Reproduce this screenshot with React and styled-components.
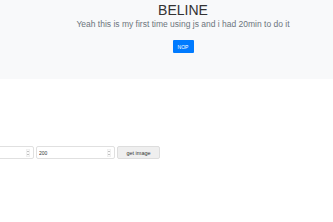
import React from 'react'
import styled, { createGlobalStyle } from 'styled-components';

const GlobalStyle = createGlobalStyle`
body {
margin:0;
background:#ffffff;
font-family:"Liberation Sans", Arial, sans-serif;
overflow:hidden;
}
`

function NumberField(props) {
    return (
        <FieldWrap>
            <NumberInput type="number" defaultValue={props.value} />
            <Spinner width="4" height="8" viewBox="0 0 4 8">
                <rect x="0.25" y="0.25" width="3.5" height="7.5" rx="1" fill="#fafafa" stroke="#dcdcdc" strokeWidth="0.5" />
                <path d="M1 3 L2 2 L3 3 Z" fill="#8a8a8a" />
                <path d="M1 5 L2 6 L3 5 Z" fill="#8a8a8a" />
            </Spinner>
        </FieldWrap>
    )
}

export default function App() {
    return (
        <div>
            <GlobalStyle />
            <Jumbotron>
                <Title>BELINE</Title>
                <Lead>Yeah this is my first time using js and i had 20min to do it</Lead>
                <PrimaryBtn>NOP</PrimaryBtn>
            </Jumbotron>
            <FormRow>
                <NumberField value="200" />
                <NumberField value="200" />
                <GetBtn>get image</GetBtn>
            </FormRow>
        </div>
    )
}

const Jumbotron = styled.div`
height:79px;
box-sizing:border-box;
padding:2px 0 0 33px;
background-color:#f8f9fa;
display:flex;
flex-direction:column;
align-items:center;
`

const Title = styled.h1`
margin:0;
font-size:14px;
font-weight:400;
line-height:1.2;
color:#333333;
`

const Lead = styled.p`
margin:0;
font-size:8.5px;
font-weight:400;
line-height:1.2;
color:#6c757d;
`

const PrimaryBtn = styled.button`
margin-top:11px;
width:21px;
height:13.5px;
padding:0;
border:none;
border-radius:1px;
background:#007bff;
color:white;
font-family:"Liberation Sans", Arial, sans-serif;
font-size:5px;
`

const FormRow = styled.div`
display:flex;
align-items:center;
gap:2px;
margin:67px 0 0 -45px;
`

const FieldWrap = styled.div`
position:relative;
display:flex;
`

const NumberInput = styled.input`
width:79px;
height:13px;
box-sizing:border-box;
padding:0 2px;
border:1px solid #e0e0e0;
border-radius:2px;
font-family:"Liberation Sans", Arial, sans-serif;
font-size:5px;
color:#333333;
-moz-appearance:textfield;

&::-webkit-inner-spin-button,
&::-webkit-outer-spin-button {
-webkit-appearance:none;
margin:0;
}
`

const Spinner = styled.svg`
position:absolute;
right:4px;
top:2.5px;
`

const GetBtn = styled.button`
width:43px;
height:13px;
padding:0;
border:1px solid #dddddd;
border-radius:2px;
background:#efefef;
color:#333333;
font-family:"Liberation Sans", Arial, sans-serif;
font-size:5.5px;
`
